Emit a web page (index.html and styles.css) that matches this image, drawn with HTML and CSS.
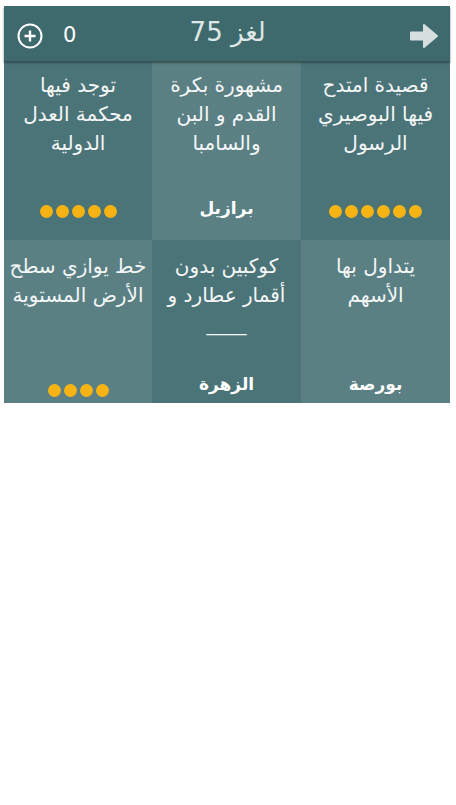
FILE: index.html
```html
<!DOCTYPE html>
<html lang="ar" dir="rtl">
<head>
  <meta charset="UTF-8" />
  <meta name="viewport" content="width=device-width, initial-scale=1.0" />
  <title>لغز 75</title>
  <link rel="stylesheet" href="styles.css">
</head>
<body>
  <div class="game">
    <div class="topbar">
      <span class="next">
        <svg width="30" height="28" viewBox="0 0 30 28">
          <path d="M2 10.5 H15 V3 L28 14 L15 25 V17.5 H2 Z" fill="#d6dede" stroke="#d6dede" stroke-width="2" stroke-linejoin="round"/>
        </svg>
      </span>
      <h1>لغز 75</h1>
      <span class="score">0</span>
      <span class="hint">
        <svg width="28" height="28" viewBox="0 0 28 28">
          <circle cx="14" cy="14" r="11.5" fill="none" stroke="#fff" stroke-width="2"/>
          <path d="M14 8.5 V19.5 M8.5 14 H19.5" stroke="#fff" stroke-width="2.4"/>
        </svg>
      </span>
    </div>

    <div class="board">
      <div class="cell dark">
        <p class="clue">قصيدة امتدح<br>فيها البوصيري<br>الرسول</p>
        <div class="dots"><i></i><i></i><i></i><i></i><i></i><i></i></div>
      </div>
      <div class="cell light">
        <p class="clue">مشهورة بكرة<br>القدم و البن<br>والسامبا</p>
        <div class="answer">برازيل</div>
      </div>
      <div class="cell dark">
        <p class="clue">توجد فيها<br>محكمة العدل<br>الدولية</p>
        <div class="dots"><i></i><i></i><i></i><i></i><i></i></div>
      </div>

      <div class="cell light row2">
        <p class="clue">يتداول بها<br>الأسهم</p>
        <div class="answer">بورصة</div>
      </div>
      <div class="cell dark row2">
        <p class="clue">كوكبين بدون<br>أقمار عطارد و<br>____</p>
        <div class="answer">الزهرة</div>
      </div>
      <div class="cell light row2">
        <p class="clue">خط يوازي سطح<br>الأرض المستوية</p>
        <div class="dots"><i></i><i></i><i></i><i></i></div>
      </div>
    </div>
  </div>
</body>
</html>
```

FILE: styles.css
```css
body {
  margin: 0;
  background: #fff;
  font-family: 'DejaVu Sans', sans-serif;
  color: #fff;
}
.game {
  margin: 6px 6px 0 4px;
}
.topbar {
  position: relative;
  z-index: 1;
  height: 55px;
  background: #3e6a6d;
  box-shadow: 0 2px 2px rgba(30, 50, 52, 0.6);
  display: flex;
  align-items: center;
  padding: 0 11px 0 12px;
}
.topbar h1 {
  flex: 1;
  margin: 0 0 3px 0;
  text-align: center;
  font-size: 26px;
  font-weight: normal;
  color: #dfe6e6;
  padding-right: 30px;
}
.next {
  display: flex;
  margin-top: 4px;
}
.score {
  font-size: 21px;
  margin-left: 19px;
  margin-top: 2px;
}
.hint {
  display: flex;
  margin-top: 4px;
}
.board {
  display: grid;
  grid-template-columns: 149px 149px 148px;
  grid-template-rows: 179px 163px;
}
.cell {
  display: flex;
  flex-direction: column;
  align-items: center;
  text-align: center;
}
.dark {
  background: #4b7478;
}
.light {
  background: #5a8084;
}
.clue {
  flex: 1;
  margin: 0;
  padding-top: 10px;
  font-size: 20px;
  line-height: 29px;
  color: #f4f6f6;
}
.row2 .clue {
  padding-top: 12px;
}
.answer {
  font-size: 17px;
  font-weight: bold;
  margin-bottom: 22px;
}
.row2 .answer {
  margin-bottom: 9px;
}
.dots {
  display: flex;
  gap: 3px;
  margin-bottom: 22px;
}
.row2 .dots {
  margin-bottom: 6px;
}
.dots i {
  width: 13px;
  height: 13px;
  border-radius: 50%;
  background: #f6b314;
}
```
